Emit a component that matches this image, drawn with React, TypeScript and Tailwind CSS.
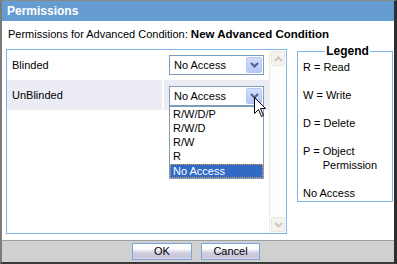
import React from "react";

function Chevron({ color = "#4d6185" }: { color?: string }) {
  return (
    <svg width="9" height="6" viewBox="0 0 9 6" className="block">
      <path d="M1 1 L4.5 4.5 L8 1" fill="none" stroke={color} strokeWidth="2" />
    </svg>
  );
}

function Select({ open = false }: { open?: boolean }) {
  return (
    <div className="relative w-[95px] h-[20px] border border-[#7f9db9] bg-white flex items-center">
      <span className="pl-[4px] flex-1 leading-[14px]">No Access</span>
      <div className="w-[16px] h-[16px] mr-[1px] rounded-[2px] border border-[#b4c6f2] bg-[linear-gradient(to_bottom,#d3defc,#b5c8f8)] flex items-center justify-center">
        <Chevron />
      </div>
      {open && (
        <div className="absolute left-[-1px] top-[19px] w-[95px] h-[73px] border border-[#7f9db9] bg-white z-10 flex flex-col">
          <div className="h-[14px] leading-[14px] pl-[3px]">R/W/D/P</div>
          <div className="h-[14px] leading-[14px] pl-[3px]">R/W/D</div>
          <div className="h-[14px] leading-[14px] pl-[3px]">R/W</div>
          <div className="h-[14px] leading-[14px] pl-[3px]">R</div>
          <div className="h-[14px] leading-[12px] pl-[2px] mt-[1px] bg-[#316ac5] text-white border border-dotted border-[#e6a24a]">
            No Access
          </div>
        </div>
      )}
    </div>
  );
}

function ScrollBtn({ up }: { up: boolean }) {
  return (
    <div className="w-[14px] h-[15px] rounded-[2px] border border-[#e8e7df] bg-[#f4f3ee] flex items-center justify-center">
      <svg width="9" height="6" viewBox="0 0 9 6" className="block">
        <path d={up ? "M1 5 L4.5 1.5 L8 5" : "M1 1 L4.5 4.5 L8 1"} fill="none" stroke="#cbc9bd" strokeWidth="2" />
      </svg>
    </div>
  );
}

function Cursor() {
  return (
    <svg width="13" height="21" viewBox="0 0 13 21" className="absolute left-[252px] top-[96px] z-20">
      <path
        d="M0.5 0.5 L0.5 16.5 L4.5 12.5 L7.5 19.5 L9.5 18.5 L6.5 11.5 L11.5 11.5 Z"
        fill="#fff"
        stroke="#000"
        strokeWidth="1"
        strokeLinejoin="miter"
      />
    </svg>
  );
}

export default function App() {
  return (
    <div className="relative w-[397px] h-[264px] flex flex-col border-t border-t-[#8a8a8a] border-l-2 border-l-[#7c7c7c] border-r-[3px] border-r-[#2e2e2e] border-b-2 border-b-[#3a3a3a] bg-white font-['Liberation_Sans',Arial,sans-serif] text-[11px] text-black">
      <div className="h-[20px] shrink-0 bg-[#669dd0] text-white font-bold text-[12px] leading-[20px] pl-[5px]">
        Permissions
      </div>
      <div className="flex-1 flex flex-col bg-white">
        <div className="h-[28px] pt-[6px] pl-[6px] leading-[14px] shrink-0">
          Permissions for Advanced Condition: <span className="font-bold text-[11.5px]">New Advanced Condition</span>
        </div>
        <div className="flex items-start pl-[4px]">
          <div className="w-[281px] h-[185px] border border-[#7eb4ea] flex">
            <div className="w-[262px] flex flex-col">
              <div className="flex h-[30px]">
                <div className="w-[155px] pl-[5px] flex items-center bg-white">Blinded</div>
                <div className="w-[2px] bg-white" />
                <div className="w-[105px] pl-[5px] flex items-center bg-white">
                  <Select />
                </div>
              </div>
              <div className="flex h-[30px]">
                <div className="w-[155px] pl-[5px] flex items-center bg-[#ececf4]">UnBlinded</div>
                <div className="w-[2px] bg-white" />
                <div className="w-[105px] pl-[5px] pt-[1px] flex items-center bg-[#ececf4]">
                  <Select open />
                </div>
              </div>
            </div>
            <div className="w-[17px] border-l border-[#ecebe4] bg-[#fdfdfb] flex flex-col justify-between px-[1px] py-[1px]">
              <ScrollBtn up />
              <ScrollBtn up={false} />
            </div>
          </div>
          <fieldset className="ml-[10px] -mt-[5px] w-[96px] h-[158px] border border-[#7eb4ea] pl-[5px] pt-[2px]">
            <legend className="mx-auto px-[1px] font-bold text-[12px] leading-[14px]">Legend</legend>
            <div className="flex flex-col gap-[14px] leading-[14px]">
              <div>R = Read</div>
              <div>W = Write</div>
              <div>D = Delete</div>
              <div className="flex">
                <span className="whitespace-pre">P = </span>
                <span>
                  Object
                  <br />
                  Permission
                </span>
              </div>
              <div>No Access</div>
            </div>
          </fieldset>
        </div>
      </div>
      <div className="h-[22px] shrink-0 border-t border-[#9e9e9e] bg-[#d0d0d0] flex justify-center gap-[9px] pt-[2px] pr-[4px]">
        <button className="w-[60px] h-[17px] border border-[#78a6d8] bg-[linear-gradient(to_bottom,#ffffff_0%,#ffffff_30%,#cfcce0_60%,#c9c6dc_90%,#e6e5ee_100%)] text-[11px] leading-[15px] text-black">
          OK
        </button>
        <button className="w-[59px] h-[17px] border border-[#78a6d8] bg-[linear-gradient(to_bottom,#ffffff_0%,#ffffff_30%,#cfcce0_60%,#c9c6dc_90%,#e6e5ee_100%)] text-[11px] leading-[15px] text-black">
          Cancel
        </button>
      </div>
      <Cursor />
    </div>
  );
}
